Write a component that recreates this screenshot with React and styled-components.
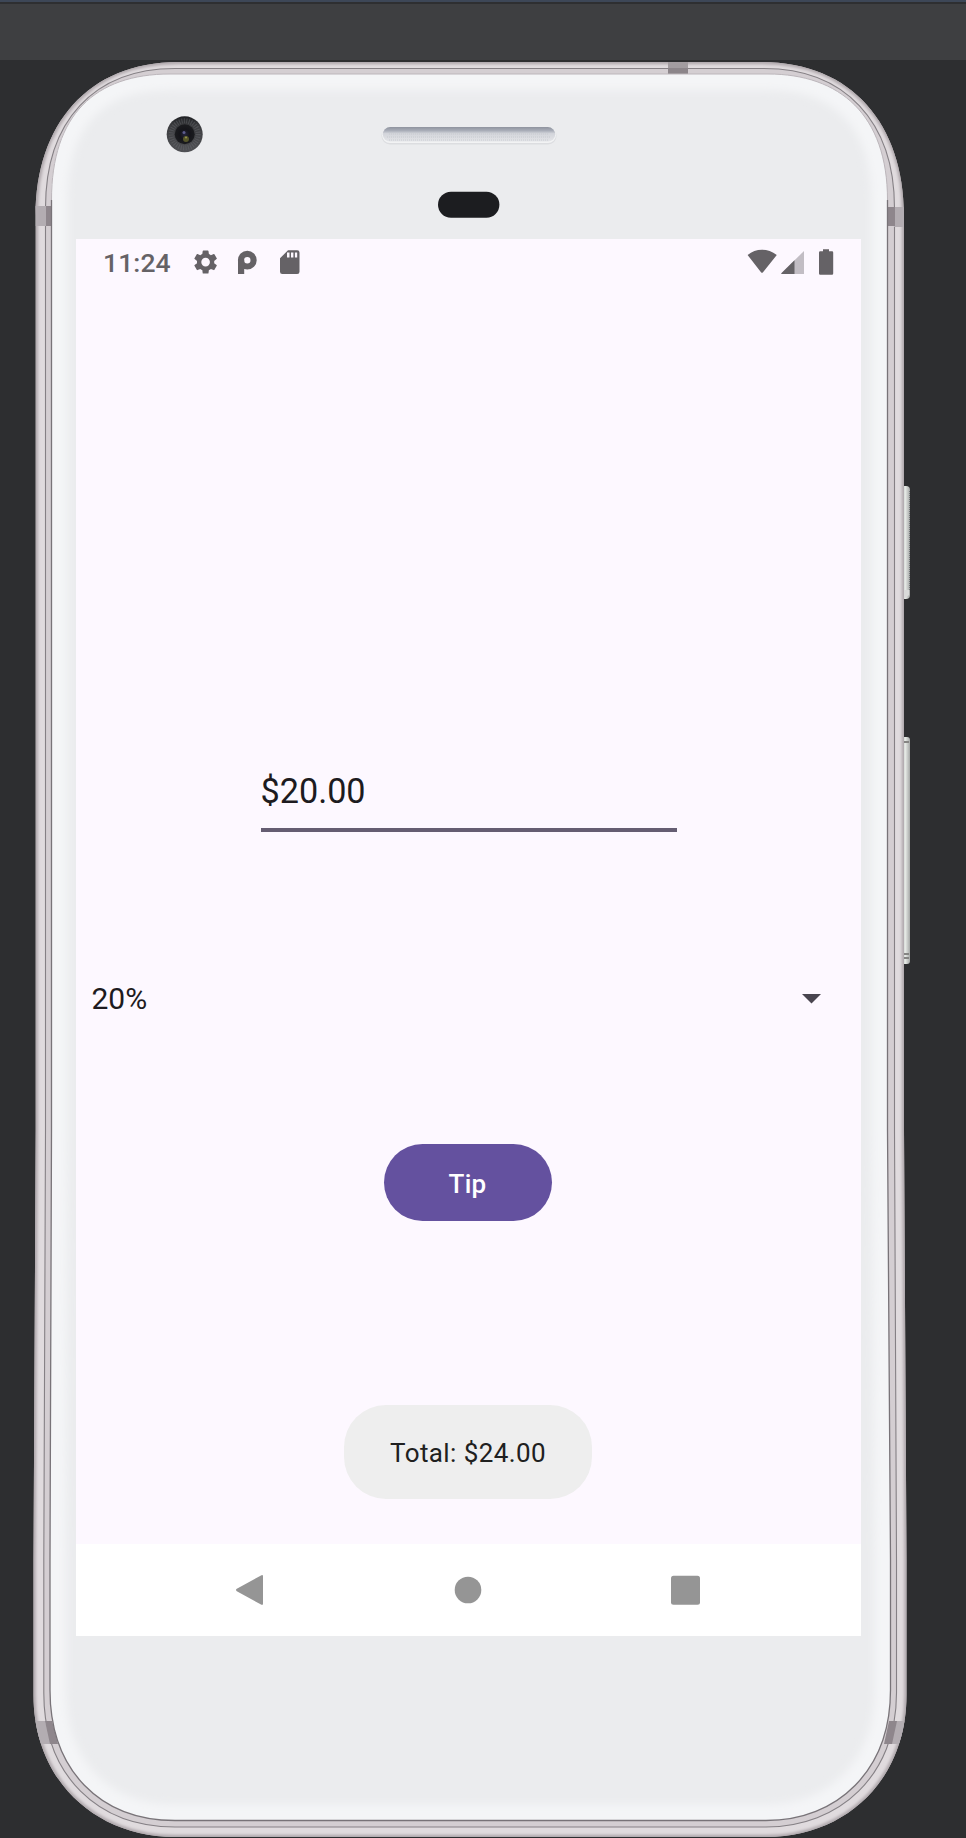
import React from 'react';
import styled, { createGlobalStyle } from 'styled-components';

const GlobalStyle = createGlobalStyle`
  *, *::before, *::after { box-sizing: border-box; }
  html, body { margin: 0; padding: 0; }
  body { background: #2d2e30; font-family: Roboto, "Liberation Sans", sans-serif; }
`;

const Page = styled.main`
  position: relative;
  width: 966px;
  height: 1838px;
  overflow: hidden;
  display: flex;
  flex-direction: column;
  background: #2d2e30;
`;

const Toolbar = styled.header`
  flex: none;
  height: 60px;
  border-top: 2px solid #3d4757;
  box-shadow: inset 0 2px #2e2f31;
  background: #3e3f41;
`;

const Stage = styled.section`
  flex: 1;
  padding: 179px 0 0 76px;
`;

const DeviceArt = styled.svg`
  position: absolute;
  inset: 0;
  width: 966px;
  height: 1838px;
`;

const Screen = styled.div`
  position: relative;
  width: 785px;
  height: 1397px;
  display: flex;
  flex-direction: column;
  background: #fdf8ff;
`;

const StatusBar = styled.div`
  height: 56px;
  padding: 9px 26px 0 27px;
  display: flex;
  align-items: flex-start;
  justify-content: space-between;
`;

const StatusGroup = styled.div`
  display: flex;
  align-items: flex-start;
`;

const Clock = styled.span`
  width: 69px;
  font-size: 26.5px;
  font-weight: 500;
  line-height: 30px;
  letter-spacing: 0.1px;
  color: #656266;
`;

const StatusIcon = styled.svg`
  display: block;
  flex: none;
  fill: #656266;
`;

const Content = styled.div`
  flex: 1;
  display: flex;
  flex-direction: column;
  align-items: center;
`;

const Amount = styled.div`
  width: 416px;
  height: 63px;
  margin-top: 474px;
  border-bottom: 4px solid #655d72;
  font-size: 34.2px;
  line-height: 44px;
  color: #1d1b20;
`;

const Spinner = styled.div`
  width: 100%;
  height: 48px;
  margin-top: 143px;
  padding: 0 40px 0 15.5px;
  display: flex;
  align-items: center;
  justify-content: space-between;
  font-size: 30px;
  color: #1d1b20;
`;

const SpinnerValue = styled.span`
  padding-bottom: 2px;
`;

const TipButton = styled.button`
  width: 168px;
  height: 77px;
  margin: 121px 2px 0 0;
  padding: 3px 0 0;
  border: 0;
  border-radius: 39px;
  background: #64519f;
  color: #fff;
  font: 500 26px Roboto, sans-serif;
  letter-spacing: 0.3px;
`;

const Toast = styled.div`
  width: 248px;
  height: 94px;
  margin: 183.5px 1px 0 0;
  padding-top: 3px;
  display: flex;
  align-items: center;
  justify-content: center;
  border-radius: 42px;
  background: #eee;
  color: #202020;
  font-size: 26px;
  letter-spacing: 0.4px;
`;

const NavBar = styled.nav`
  height: 92px;
  padding: 0 161px 0 160px;
  display: flex;
  align-items: center;
  justify-content: space-between;
  background: #fff;
`;

const NavIcon = styled.svg`
  display: block;
  width: 30px;
  height: 32px;
  fill: #959595;
`;

const OUTER =
  'M178 62H762C852 62 904 125 904 215V1130L906.5 1560V1695C906.5 1780 846 1837 766 1837H175C95 1837 33.5 1780 33.5 1695V1560L35.7 1130V215C35.7 125 88 62 178 62Z';
const SEAM =
  'M175 68.5H764C844 68.5 894.5 121 894.5 208V1130L896.5 1560V1693C896.5 1776 839 1827 766 1827H175C98 1827 43.8 1776 43.8 1693V1560L45.5 1130V208C45.5 121 94 68.5 175 68.5Z';
const FACE =
  'M170 74H768C840 74 887.5 115 887.5 200V1130L890.5 1560V1690C890.5 1770 838 1820.5 766 1820.5H175C100 1820.5 50 1770 50 1690V1560L51.5 1130V200C51.5 115 95 74 170 74Z';

function Device() {
  return (
    <DeviceArt viewBox="0 0 966 1838" aria-hidden="true">
      <defs>
        <clipPath id="outer"><path d={OUTER} /></clipPath>
        <clipPath id="face"><path d={FACE} /></clipPath>
        <filter id="soft" x="-5%" y="-5%" width="110%" height="110%">
          <feGaussianBlur stdDeviation="4" />
        </filter>
        <filter id="edge" x="-5%" y="-5%" width="110%" height="110%">
          <feGaussianBlur stdDeviation="1.6" />
        </filter>
        <linearGradient id="speaker" x1="0" y1="0" x2="0" y2="1">
          <stop offset="0" stopColor="#8e939e" />
          <stop offset="0.25" stopColor="#a9adb8" />
          <stop offset="0.45" stopColor="#d3d5db" />
          <stop offset="1" stopColor="#e4e5e8" />
        </linearGradient>
        <linearGradient id="key" x1="0" y1="0" x2="1" y2="0">
          <stop offset="0" stopColor="#b9bcba" />
          <stop offset="0.55" stopColor="#e4e8e4" />
          <stop offset="1" stopColor="#a5a7a6" />
        </linearGradient>
        <radialGradient id="lens">
          <stop offset="0" stopColor="#24243c" />
          <stop offset="0.5" stopColor="#15151a" />
          <stop offset="1" stopColor="#1b1c1f" />
        </radialGradient>
        <linearGradient id="cameraRim" x1="0" y1="0" x2="0" y2="1">
          <stop offset="0" stopColor="#1d1f22" />
          <stop offset="0.25" stopColor="#3b3c3f" />
          <stop offset="1" stopColor="#505155" />
        </linearGradient>
      </defs>

      <rect x="900" y="486" width="10" height="113" rx="4" fill="url(#key)" />
      <path d="M909.5 491V590" stroke="#75787a" strokeDasharray="1 1" />
      <path d="M904 590h5v5l-5 4z" fill="#d9dad9" />
      <rect x="900" y="737" width="10" height="227" rx="3" fill="url(#key)" />
      <path d="M904 742h5M904 954h5M904 958h5" stroke="#858583" strokeWidth="2" />

      <path d={OUTER} fill="#e0dbde" />
      <g clipPath="url(#outer)">
        <path d={OUTER} fill="none" stroke="#aaa3a7" strokeWidth="4" filter="url(#edge)" />
        <path d="M150 1835H790" stroke="#8e858b" strokeWidth="6" filter="url(#edge)" />
      </g>
      <path d={SEAM} fill="#d4ced2" stroke="#858085" strokeWidth="1.1" />
      <g clipPath="url(#outer)">
        <path d="M33 206H46V226H33ZM894 207H908V227H894ZM33 1721H45L51 1744H33ZM896 1721H908V1744H890Z" fill="#b3adb2" />
        <path d="M46 206H52V226H46ZM887 207H895V226H887ZM45 1721H52L58 1744H50ZM889 1721H897L892 1744H884Z" fill="#8e868c" />
        <path d="M668 62H688V68H668Z" fill="#a29ca0" />
        <path d="M668 68H688V75H668Z" fill="#8c858a" />
      </g>
      <path d={FACE} fill="#ebecee" />
      <g clipPath="url(#face)">
        <path d={FACE} fill="none" stroke="#f4f5f7" strokeWidth="32" filter="url(#soft)" />
      </g>
      <path d="M51.5 200V1130L50 1560V1690C50 1770 100 1820.5 175 1820.5H766C838 1820.5 890.5 1770 890.5 1690V1560L887.5 1130V200" fill="none" stroke="#787378" strokeWidth="1.3" />
      <path d="M51.5 200C51.5 115 95 74 170 74H768C840 74 887.5 115 887.5 200" fill="none" stroke="#bcb6bb" />

      <circle cx="184.7" cy="134.3" r="18" fill="url(#cameraRim)" />
      <circle cx="184.7" cy="134.3" r="13.5" fill="none" stroke="#717277" strokeWidth="5" strokeDasharray="1 1.4" opacity="0.4" />
      <circle cx="184.7" cy="134.3" r="10" fill="url(#lens)" />
      <circle cx="184" cy="132.5" r="1.5" fill="#5c5b8c" />
      <circle cx="186" cy="139" r="3" fill="#55552a" />
      <circle cx="186" cy="137.5" r="1" fill="#9a984f" />

      <rect x="381.5" y="127.5" width="175" height="17" rx="8.5" fill="#dcdde0" />
      <rect x="382" y="127" width="174" height="16" rx="8" fill="#f2f3f4" />
      <rect x="382.8" y="127" width="172.4" height="14.6" rx="7.3" fill="url(#speaker)" />
      <path d="M389 134H549M387 137H551M389 140H549" stroke="#c3c6cd" strokeWidth="0.8" strokeDasharray="1 1" />
      <rect x="438" y="191.7" width="61.4" height="26" rx="13" fill="#1c1d20" />
    </DeviceArt>
  );
}

function Status() {
  return (
    <StatusBar>
      <StatusGroup>
        <Clock>11:24</Clock>
        <StatusIcon width="130" height="30" viewBox="172 248 130 30">
          <path transform="translate(191.2 247.7) scale(1.2)" d="M19.14 12.94c.04-.3.06-.61.06-.94 0-.32-.02-.64-.07-.94l2.03-1.58a.49.49 0 0 0 .12-.61l-1.92-3.32a.488.488 0 0 0-.59-.22l-2.39.96c-.5-.38-1.03-.7-1.62-.94l-.36-2.54a.484.484 0 0 0-.48-.41h-3.84c-.24 0-.43.17-.47.41l-.36 2.54c-.59.24-1.13.57-1.62.94l-2.39-.96c-.22-.08-.47 0-.59.22L2.74 8.87c-.12.21-.08.47.12.61l2.03 1.58c-.05.3-.09.63-.09.94s.02.64.07.94l-2.03 1.58a.49.49 0 0 0-.12.61l1.92 3.32c.12.22.37.29.59.22l2.39-.96c.5.38 1.03.7 1.62.94l.36 2.54c.05.24.24.41.48.41h3.84c.24 0 .44-.17.47-.41l.36-2.54c.59-.24 1.13-.56 1.62-.94l2.39.96c.22.08.47 0 .59-.22l1.92-3.32c.12-.22.07-.47-.12-.61l-2.01-1.58zM12 15.6A3.6 3.6 0 1 1 12 8.4a3.6 3.6 0 0 1 0 7.2z" />
          <circle cx="247.3" cy="260.2" r="6.3" fill="none" stroke="#656266" strokeWidth="6.2" />
          <rect x="238" y="260" width="6.2" height="14" />
          <path fillRule="evenodd" d="M288 250.3H297.2Q299.5 250.3 299.5 252.6V271.7Q299.5 274 297.2 274H282.3Q280 274 280 271.7V258.3ZM287 252.5V257.5H289.5V252.5ZM291 252.5V257.5H293.4V252.5ZM294.9 252.5V257.5H297.2V252.5Z" />
        </StatusIcon>
      </StatusGroup>
      <StatusIcon width="90" height="30" viewBox="745 248 90 30">
        <path d="M747.6 255Q754 249.7 762 249.7T776.8 255L763 272.2Q762 273.5 761 272.2Z" />
        <path d="M804 251V274H782Q780.5 274 781.6 272.9Z" fill="#c2bdc4" />
        <path d="M794.5 260.2V274H782Q780.5 274 781.6 272.9Z" />
        <path d="M823 249.2H829V251.2H832Q833.2 251.2 833.2 252.5V273.5Q833.2 274.7 832 274.7H820.2Q819 274.7 819 273.5V252.5Q819 251.2 820.2 251.2H823Z" />
      </StatusIcon>
    </StatusBar>
  );
}

export default function App() {
  return (
    <>
      <GlobalStyle />
      <Page>
        <Device />
        <Toolbar />
        <Stage>
          <Screen>
            <Status />
            <Content>
              <Amount>$20.00</Amount>
              <Spinner>
                <SpinnerValue>20%</SpinnerValue>
                <svg width="19" height="10" viewBox="0 0 19 10" fill="#49454f">
                  <path d="M0 0H19L9.5 9.5Z" />
                </svg>
              </Spinner>
              <TipButton>Tip</TipButton>
              <Toast>Total: $24.00</Toast>
            </Content>
            <NavBar>
              <NavIcon viewBox="0 0 30 32">
                <path d="M25 1.5Q27 .4 27 2.5V29.5Q27 31.6 25 30.5L.8 17.2Q-.8 16 .8 14.8Z" />
              </NavIcon>
              <NavIcon viewBox="0 0 30 32">
                <circle cx="15" cy="16" r="13.3" />
              </NavIcon>
              <NavIcon viewBox="0 0 30 32">
                <rect x="1" y="1.7" width="29" height="29" rx="2.5" />
              </NavIcon>
            </NavBar>
          </Screen>
        </Stage>
      </Page>
    </>
  );
}
